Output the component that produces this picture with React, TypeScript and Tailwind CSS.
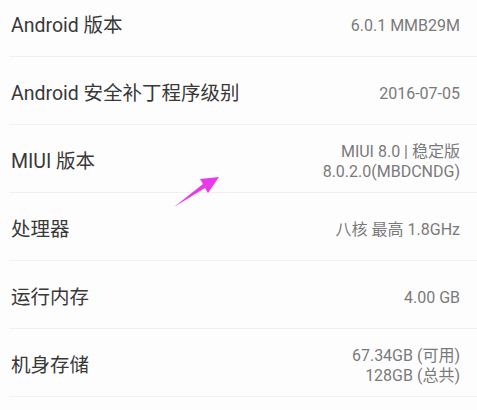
import React from "react";

type Row = { label: string; value: string[] };

const rows: Row[] = [
  { label: "Android 版本", value: ["6.0.1 MMB29M"] },
  { label: "Android 安全补丁程序级别", value: ["2016-07-05"] },
  { label: "MIUI 版本", value: ["MIUI 8.0 | 稳定版", "8.0.2.0(MBDCNDG)"] },
  { label: "处理器", value: ["八核 最高 1.8GHz"] },
  { label: "运行内存", value: ["4.00 GB"] },
  { label: "机身存储", value: ["67.34GB (可用)", "128GB (总共)"] },
];

export default function App() {
  return (
    <div
      className="relative w-[477px] h-[410px] overflow-hidden bg-[#fefdfe]"
      style={{ fontFamily: 'Roboto, "Noto Sans CJK SC", sans-serif' }}
    >
      <div className="-mt-[11px] pl-[9px]">
        {rows.map((r) => (
          <div
            key={r.label}
            className="flex h-[68px] items-center justify-between border-b border-[#f1eff1] pr-[17px] pt-[6px]"
          >
            <div className="pl-[2px] text-[19.5px] text-[#383838]">{r.label}</div>
            <div className="flex flex-col items-end text-[16px] leading-[20px] text-[#7a7a7a]">
              {r.value.map((v) => (
                <div key={v}>{v}</div>
              ))}
            </div>
          </div>
        ))}
      </div>
      <svg
        className="absolute left-0 top-0"
        width="477"
        height="410"
        viewBox="0 0 477 410"
      >
        <path
          d="M174 207 L205 188 L208 193 L219 177 L200 179 L203 184 Z"
          fill="#e83ae8"
        />
      </svg>
    </div>
  );
}
